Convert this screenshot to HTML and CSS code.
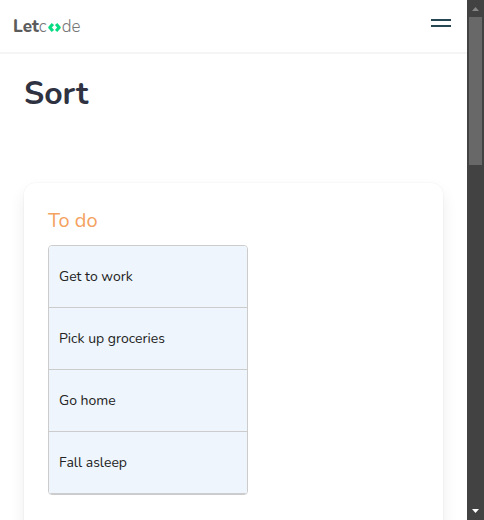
FILE: index.html
```html
<!DOCTYPE html>
<html lang="en">
<head>
  <meta charset="utf-8">
  <meta name="viewport" content="width=device-width, initial-scale=1">
  <title>Sort</title>
  <link rel="stylesheet" href="styles.css">
</head>
<body>
  <div class="page">
    <header class="navbar">
      <a class="brand" href="#" aria-label="Letcode">
        <b>Let</b><span>c</span><svg class="brand-mark" viewBox="0 0 12 10" aria-hidden="true"><path d="M4.500 1.700 1.700 5 4.500 8.300M7.500 1.700 10.300 5 7.500 8.300" fill="none" stroke="#08dc83" stroke-width="2.900" stroke-linejoin="round"/></svg><span>de</span>
      </a>
      <button class="burger" type="button" aria-label="menu"><span></span><span></span></button>
    </header>
    <main class="content">
      <h1 class="title">Sort</h1>
      <section class="card">
        <h2 class="subtitle">To do</h2>
        <ul class="list">
          <li class="item">Get to work</li>
          <li class="item">Pick up groceries</li>
          <li class="item">Go home</li>
          <li class="item">Fall asleep</li>
        </ul>
      </section>
    </main>
  </div>
  <div class="scrollbar" aria-hidden="true">
    <svg class="arrow" viewBox="0 0 17 17"><path d="M5 11 8.500 7 12 11z" fill="#868686"/></svg>
    <div class="track"><div class="thumb"></div></div>
    <svg class="arrow" viewBox="0 0 17 17"><path d="M5 6 8.500 10 12 6z" fill="#fff"/></svg>
  </div>
</body>
</html>
```
FILE: styles.css
```css
* {
  box-sizing: border-box;
}

body {
  display: flex;
  height: 100vh;
  margin: 0;
  overflow: hidden;
  background: #fff;
  color: #222;
  font-family: Nunito, Lato, sans-serif;
}

.page {
  flex: 1;
  min-width: 0;
  overflow: hidden;
}

.navbar {
  display: flex;
  align-items: center;
  justify-content: space-between;
  height: 54px;
  padding: 0 16px 0 13px;
  border-bottom: 2px solid #f5f5f5;
}

.brand {
  display: flex;
  align-items: center;
  padding-top: 2px;
  color: #777;
  font-size: 17px;
  font-weight: 300;
  line-height: 20px;
  text-decoration: none;
}

.brand b {
  color: #5c5c5c;
  font-weight: 800;
}

.brand-mark {
  width: 13px;
  height: 11px;
  margin: 1px 1px 0 1px;
}

.burger {
  display: flex;
  flex-direction: column;
  gap: 4px;
  width: 20px;
  margin-bottom: 6px;
  padding: 0;
  border: 0;
  background: none;
}

.burger span {
  width: 100%;
  height: 2px;
  background: #264653;
}

.content {
  padding: 20px 24px 24px;
}

.title {
  margin: 0 0 69px;
  color: #2f3241;
  font-size: 32px;
  font-weight: 700;
  line-height: 40px;
}

.card {
  min-height: 400px;
  padding: 24px;
  border-radius: 12px;
  background: #fff;
  box-shadow: 0 8px 16px rgba(10, 10, 10, 0.08), 0 0 0 1px rgba(10, 10, 10, 0.02);
}

.subtitle {
  margin: 0 0 10px;
  color: #f4a261;
  font-size: 20px;
  font-weight: 400;
  line-height: 28px;
}

.list {
  width: 200px;
  max-width: 100%;
  margin: 0;
  padding: 0;
  overflow: hidden;
  border: 1px solid #ccc;
  border-radius: 4px;
  list-style: none;
}

.item {
  display: flex;
  align-items: center;
  height: 62px;
  padding: 0 10px;
  border-bottom: 1px solid #ccc;
  background: #eef5fc;
  font-size: 14px;
}

.scrollbar {
  display: flex;
  flex-direction: column;
  width: 17px;
  background: #424242;
}

.arrow {
  width: 17px;
  height: 17px;
}

.track {
  flex: 1;
  padding: 0 2px;
}

.thumb {
  width: 13px;
  height: 148px;
  background: #686868;
}
```
